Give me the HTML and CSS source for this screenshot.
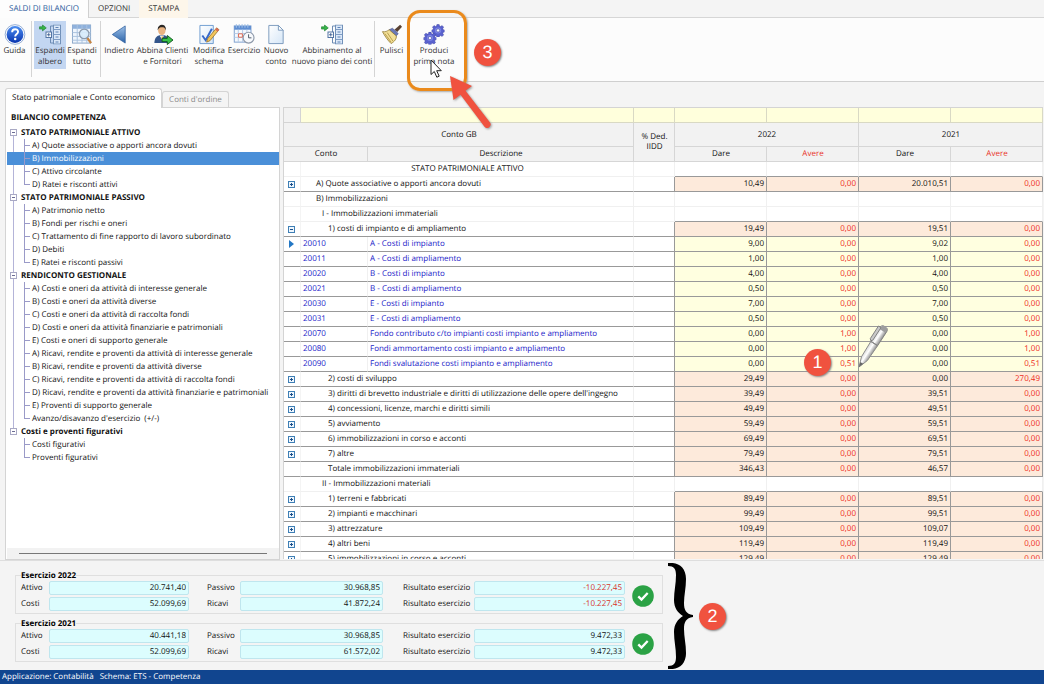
FILE: index.html
```html
<!DOCTYPE html>
<html lang="it">
<head>
<meta charset="utf-8">
<title>Saldi di bilancio</title>
<link rel="stylesheet" href="styles.css">
</head>
<body>
<svg class="defs" aria-hidden="true">
  <defs>
    <linearGradient id="blueV" x1="0" y1="0" x2="0" y2="1"><stop offset="0" stop-color="#4b8df0"/><stop offset="1" stop-color="#0a35b0"/></linearGradient>
    <linearGradient id="backG" x1="0" y1="0" x2="0" y2="1"><stop offset="0" stop-color="#9cc0e8"/><stop offset="1" stop-color="#2a62a8"/></linearGradient>
    <linearGradient id="paper" x1="0" y1="0" x2="1" y2="1"><stop offset="0" stop-color="#ffffff"/><stop offset="1" stop-color="#d5e6f7"/></linearGradient>
    <linearGradient id="penG" x1="0" y1="0" x2="1" y2="0"><stop offset="0" stop-color="#d8d8d8"/><stop offset=".45" stop-color="#ffffff"/><stop offset="1" stop-color="#8c8c8c"/></linearGradient>
    <symbol id="plus" viewBox="0 0 7 7"><rect x=".5" y=".5" width="6" height="6" fill="#eef6fd" stroke="#3f7fb5"/><path d="M2 3.5h3M3.5 2v3" stroke="#1b4f8a"/></symbol>
    <symbol id="minus" viewBox="0 0 7 7"><rect x=".5" y=".5" width="6" height="6" fill="#eef6fd" stroke="#3f7fb5"/><path d="M2 3.5h3" stroke="#1b4f8a"/></symbol>
    <symbol id="collapse" viewBox="0 0 7 7"><rect x=".5" y=".5" width="6" height="6" fill="#fff" stroke="#a9a9c4"/><path d="M2 3.5h3" stroke="#6c6c94"/></symbol>
    <symbol id="ok" viewBox="0 0 22 22"><circle cx="11" cy="11" r="10.8" fill="#2ba245"/><path d="M6.3 11.4l3.2 3.2 6.2-6.6" fill="none" stroke="#fff" stroke-width="2.3"/></symbol>
    <symbol id="treeicon" viewBox="0 0 22 20">
      <path d="M11.500 1.500h3M11.500 18.500h3M11.500 1.500v6M11.500 13v5.500" fill="none" stroke="#6d8cb4"/>
      <rect x="14.500" y=".5" width="7" height="19" fill="#dbe8f8" stroke="#7190b8"/>
      <path d="M14.500 5h7M14.500 10h7M14.500 15h7" stroke="#7e9cc4" fill="none"/><path d="M16.500 3h3M16.500 7.500h3M16.500 12.500h3M16.500 17.500h3" stroke="#5f83b6"/>
      <rect x="7" y="7.500" width="5.500" height="5.500" fill="#fff" stroke="#5375a4"/><path d="M8 10.250h3.500M9.750 8.500v3.500" stroke="#2f5288" stroke-width=".8"/>
      <path d="M.5 2.300h3V.4l3.800 3-3.800 3V4.600h-3z" fill="#39b54a" stroke="#157a2a" stroke-width=".6"/>
    </symbol>
    <symbol id="gear" viewBox="-7 -7 14 14">
      <g fill="#5a62cf" stroke="#3d439f" stroke-width=".5">
        <path d="M-1.200-6.500h2.400l.4 1.700 1.300.5 1.500-1 1.700 1.700-1 1.500.5 1.300 1.700.4v2l-1.700.4-.5 1.300 1 1.500-1.700 1.700-1.500-1-1.300.5-.4 1.500h-2.400l-.4-1.500-1.300-.5-1.500 1-1.700-1.700 1-1.500-.5-1.300-1.600-.4v-2l1.600-.4.5-1.300-1-1.500 1.700-1.700 1.500 1 1.300-.5z"/>
      </g>
      <circle r="3.300" fill="#7d86e6"/><circle r="1.800" fill="#f6f6ff" stroke="#3d439f" stroke-width=".6"/>
    </symbol>
  </defs>
</svg>

<nav class="menu">
  <a class="menu-tab is-active" href="#saldi">SALDI DI BILANCIO</a>
  <a class="menu-tab" href="#opzioni">OPZIONI</a>
  <a class="menu-tab is-warm" href="#stampa">STAMPA</a>
</nav>

<header class="ribbon">
  <button class="tool w-s">
    <svg viewBox="0 0 22 22"><circle cx="11" cy="11" r="10.300" fill="#fff" stroke="#7494c8" stroke-width=".8"/><circle cx="11" cy="11" r="8.800" fill="url(#blueV)"/><path d="M8 8.600c0-4.200 6.200-4 6.200-.5 0 2.300-3 2.300-3 4.900" fill="none" stroke="#fff" stroke-width="2"/><circle cx="11.200" cy="15.800" r="1.300" fill="#fff"/></svg>
    <span>Guida</span>
  </button>
  <span class="sep"></span>
  <button class="tool w-m is-on"><svg viewBox="0 0 22 20"><use href="#treeicon"/></svg><span>Espandi<br>albero</span></button>
  <button class="tool w-m">
    <svg viewBox="0 0 22 22"><rect x="1" y="1" width="19" height="19" fill="#eef5fd" stroke="#8ba7c9"/><rect x="1" y="1" width="19" height="4" fill="#8fb1dc"/><path d="M1 9h19M1 13h19M1 17h19M6 1v19M11 1v19M16 1v19" stroke="#a9c2de" fill="none"/><path d="M16.500 14.500l4 5.500" stroke="#c9853f" stroke-width="2.400"/><circle cx="13.300" cy="10.300" r="5" fill="#d9ecfb" fill-opacity=".9" stroke="#8c9aac" stroke-width="1.300"/></svg>
    <span>Espandi<br>tutto</span>
  </button>
  <span class="sep"></span>
  <button class="tool w-m"><svg viewBox="0 0 22 22"><path d="M17.500 2v18L4 11z" fill="url(#backG)" stroke="#2d5f9f" stroke-width=".8"/></svg><span>Indietro</span></button>
  <button class="tool w-l">
    <svg viewBox="0 0 22 22"><path d="M2 20c0-6 3-8.500 8-8.500s7 2 7 8.500z" fill="#34568c"/><path d="M7.500 12l2.200 4 2.500-4z" fill="#fff"/><path d="M9.300 13l.6 5 1.200-5z" fill="#d9a53a"/><ellipse cx="9.800" cy="6.800" rx="3.900" ry="5" fill="#e9b382"/><path d="M5.500 6.500C4.500-1 15-1.500 14 6.500c-1-2.500-2-3-4-3s-3.500.5-4.500 3z" fill="#2a2725"/><path d="M10 15h5.500v-3l6 4.800-6 4.700v-3H10z" fill="#38c248" stroke="#0b4c19" stroke-width=".9"/></svg>
    <span>Abbina Clienti<br>e Fornitori</span>
  </button>
  <button class="tool w-e">
    <svg viewBox="0 0 22 22"><path d="M1.500 1.500h14v19h-14z" fill="url(#paper)" stroke="#6d9bd0"/><path d="M4 12l3.500 5L14 5" fill="none" stroke="#3668c9" stroke-width="2"/><path d="M19 4l2.500 2-9.500 11.500-3.500 1.500 1-3.500z" fill="#f3c65b" stroke="#8d6a2a" stroke-width=".8"/><path d="M19 4l2.500 2-1.500 2-2.500-2z" fill="#d96a57"/></svg>
    <span>Modifica<br>schema</span>
  </button>
  <button class="tool w-m">
    <svg viewBox="0 0 22 22"><rect x=".8" y="2" width="17.500" height="17" fill="#f5f9fe" stroke="#7d9fce"/><path d="M.8 2h17.500v4H.8z" fill="#5f8ed2"/><path d="M3 .3v3.500M6 .3v3.500M9 .3v3.500M12 .3v3.500M15 .3v3.500" stroke="#9cbce6" stroke-width="1.200"/><path d="M1 10h17M1 14h17M5 6v13M9.500 6v13M14 6v13" stroke="#b6cbe6" fill="none"/><path d="M5.300 10.300h4v3.500h-4z" fill="#fff" stroke="#e2674e"/><circle cx="15.800" cy="14.300" r="5.700" fill="#f7f9fc" stroke="#8e99a9" stroke-width="1.200"/><path d="M15.800 10.800v3.700h3" fill="none" stroke="#4c5866"/></svg>
    <span>Esercizio</span>
  </button>
  <button class="tool w-m"><svg viewBox="0 0 22 22"><path d="M3.500 1.500h10l5 5v14h-15z" fill="url(#paper)" stroke="#7b99bd"/><path d="M13.500 1.500v5h5z" fill="#fff" stroke="#7b99bd"/></svg><span>Nuovo<br>conto</span></button>
  <button class="tool w-xl"><svg viewBox="0 0 22 20"><use href="#treeicon"/></svg><span>Abbinamento al<br>nuovo piano dei conti</span></button>
  <span class="sep"></span>
  <button class="tool w-s">
    <svg viewBox="0 0 22 22"><path d="M19.500.8l2 2-5 5.700-3-2.500z" fill="#5a4234"/><path d="M11.500 4.500l6 5.500-2 2.500L8 6z" fill="#6a79b8" stroke="#3e4a80" stroke-width=".6"/><path d="M8 6l7.500 6.500c.5 3-2 6-5.500 8C6.500 17 3 12 1 8c3 .6 5-.5 7-2z" fill="#f2df96" stroke="#8f7730" stroke-width=".8"/><path d="M6 9l6 9M3.500 10l6.500 9" stroke="#a98d3c" stroke-width=".8"/></svg>
    <span>Pulisci</span>
  </button>
  <button class="tool w-l2"><svg viewBox="0 0 22 22"><use href="#gear" x="8.500" y="0" width="13.500" height="13.500"/><use href="#gear" x="0" y="8" width="13.500" height="13.500"/></svg><span>Produci<br>prima nota</span></button>
</header>

<main class="work">
  <section class="side">
    <nav class="page-tabs">
      <a class="page-tab is-active" href="#stato">Stato patrimoniale e Conto economico</a>
      <a class="page-tab" href="#ordine">Conti d'ordine</a>
    </nav>
    <div class="tree-pane">
      <h1 class="tree-title">BILANCIO COMPETENZA</h1>
      <ul class="tree">
        <li><div class="node"><button class="fold" aria-label="Comprimi"><svg viewBox="0 0 7 7"><use href="#collapse"/></svg></button>STATO PATRIMONIALE ATTIVO</div>
          <ul class="leaves"><li>A) Quote associative o apporti ancora dovuti</li><li class="is-selected">B) Immobilizzazioni</li><li>C) Attivo circolante</li><li>D) Ratei e risconti attivi</li></ul></li>
        <li><div class="node"><button class="fold" aria-label="Comprimi"><svg viewBox="0 0 7 7"><use href="#collapse"/></svg></button>STATO PATRIMONIALE PASSIVO</div>
          <ul class="leaves"><li>A) Patrimonio netto</li><li>B) Fondi per rischi e oneri</li><li>C) Trattamento di fine rapporto di lavoro subordinato</li><li>D) Debiti</li><li>E) Ratei e risconti passivi</li></ul></li>
        <li><div class="node"><button class="fold" aria-label="Comprimi"><svg viewBox="0 0 7 7"><use href="#collapse"/></svg></button>RENDICONTO GESTIONALE</div>
          <ul class="leaves"><li>A) Costi e oneri da attività di interesse generale</li><li>B) Costi e oneri da attività diverse</li><li>C) Costi e oneri da attività di raccolta fondi</li><li>D) Costi e oneri da attività finanziarie e patrimoniali</li><li>E) Costi e oneri di supporto generale</li><li>A) Ricavi, rendite e proventi da attività di interesse generale</li><li>B) Ricavi, rendite e proventi da attività diverse</li><li>C) Ricavi, rendite e proventi da attività di raccolta fondi</li><li>D) Ricavi, rendite e proventi da attività finanziarie e patrimoniali</li><li>E) Proventi di supporto generale</li><li>Avanzo/disavanzo d'esercizio&nbsp; (+/-)</li></ul></li>
        <li><div class="node"><button class="fold" aria-label="Comprimi"><svg viewBox="0 0 7 7"><use href="#collapse"/></svg></button>Costi e proventi figurativi</div>
          <ul class="leaves"><li>Costi figurativi</li><li>Proventi figurativi</li></ul></li>
      </ul>
      <div class="scroll"><div class="thumb"></div></div>
    </div>
  </section>

  <section class="grid-pane">
    <table class="grid">
      <colgroup><col class="c-exp"><col class="c-conto"><col><col class="c-ded"><col class="c-num"><col class="c-num"><col class="c-num"><col class="c-num"></colgroup>
      <thead>
        <tr class="filter"><td class="corner"></td><td></td><td></td><td></td><td></td><td></td><td></td><td></td></tr>
        <tr class="head-top"><th colspan="3">Conto GB</th><th rowspan="2">% Ded.<br>IIDD</th><th colspan="2">2022</th><th colspan="2">2021</th></tr>
        <tr class="head-sub"><th colspan="2">Conto</th><th>Descrizione</th><th>Dare</th><th class="red">Avere</th><th>Dare</th><th class="red">Avere</th></tr>
      </thead>
      <tbody>
        <tr class="title lead"><td></td><td colspan="2" class="mid">STATO PATRIMONIALE ATTIVO</td><td></td><td></td><td></td><td></td><td></td></tr>
        <tr class="sum"><td><button class="exp" aria-label="Espandi"><svg viewBox="0 0 7 7"><use href="#plus"/></svg></button></td><td colspan="2" class="l1">A) Quote associative o apporti ancora dovuti</td><td></td><td>10,49</td><td>0,00</td><td>20.010,51</td><td>0,00</td></tr>
        <tr class="title"><td></td><td colspan="2" class="l1">B) Immobilizzazioni</td><td></td><td></td><td></td><td></td><td></td></tr>
        <tr class="title lead"><td></td><td colspan="2" class="l2">I - Immobilizzazioni immateriali</td><td></td><td></td><td></td><td></td><td></td></tr>
        <tr class="sum"><td><button class="exp" aria-label="Comprimi"><svg viewBox="0 0 7 7"><use href="#minus"/></svg></button></td><td colspan="2" class="l3">1) costi di impianto e di ampliamento</td><td></td><td>19,49</td><td>0,00</td><td>19,51</td><td>0,00</td></tr>
        <tr class="acc"><td><svg class="cur" viewBox="0 0 5 8"><path d="M0 0l5 4-5 4z" fill="#2377c4"/></svg></td><td>20010</td><td>A - Costi di impianto</td><td></td><td>9,00</td><td>0,00</td><td>9,02</td><td>0,00</td></tr>
        <tr class="acc"><td></td><td>20011</td><td>A - Costi di ampliamento</td><td></td><td>1,00</td><td>0,00</td><td>1,00</td><td>0,00</td></tr>
        <tr class="acc"><td></td><td>20020</td><td>B - Costi di impianto</td><td></td><td>4,00</td><td>0,00</td><td>4,00</td><td>0,00</td></tr>
        <tr class="acc"><td></td><td>20021</td><td>B - Costi di ampliamento</td><td></td><td>0,50</td><td>0,00</td><td>0,50</td><td>0,00</td></tr>
        <tr class="acc"><td></td><td>20030</td><td>E - Costi di impianto</td><td></td><td>7,00</td><td>0,00</td><td>7,00</td><td>0,00</td></tr>
        <tr class="acc"><td></td><td>20031</td><td>E - Costi di ampliamento</td><td></td><td>0,50</td><td>0,00</td><td>0,50</td><td>0,00</td></tr>
        <tr class="acc"><td></td><td>20070</td><td>Fondo contributo c/to impianti costi impianto e ampliamento</td><td></td><td>0,00</td><td>1,00</td><td>0,00</td><td>1,00</td></tr>
        <tr class="acc"><td></td><td>20080</td><td>Fondi ammortamento costi impianto e ampliamento</td><td></td><td>0,00</td><td>1,00</td><td>0,00</td><td>1,00</td></tr>
        <tr class="acc"><td></td><td>20090</td><td>Fondi svalutazione costi impianto e ampliamento</td><td></td><td>0,00</td><td>0,51</td><td>0,00</td><td>0,51</td></tr>
        <tr class="sum"><td><button class="exp" aria-label="Espandi"><svg viewBox="0 0 7 7"><use href="#plus"/></svg></button></td><td colspan="2" class="l3">2) costi di sviluppo</td><td></td><td>29,49</td><td>0,00</td><td>0,00</td><td>270,49</td></tr>
        <tr class="sum"><td><button class="exp" aria-label="Espandi"><svg viewBox="0 0 7 7"><use href="#plus"/></svg></button></td><td colspan="2" class="l3">3) diritti di brevetto industriale e diritti di utilizzazione delle opere dell'ingegno</td><td></td><td>39,49</td><td>0,00</td><td>39,51</td><td>0,00</td></tr>
        <tr class="sum"><td><button class="exp" aria-label="Espandi"><svg viewBox="0 0 7 7"><use href="#plus"/></svg></button></td><td colspan="2" class="l3">4) concessioni, licenze, marchi e diritti simili</td><td></td><td>49,49</td><td>0,00</td><td>49,51</td><td>0,00</td></tr>
        <tr class="sum"><td><button class="exp" aria-label="Espandi"><svg viewBox="0 0 7 7"><use href="#plus"/></svg></button></td><td colspan="2" class="l3">5) avviamento</td><td></td><td>59,49</td><td>0,00</td><td>59,51</td><td>0,00</td></tr>
        <tr class="sum"><td><button class="exp" aria-label="Espandi"><svg viewBox="0 0 7 7"><use href="#plus"/></svg></button></td><td colspan="2" class="l3">6) immobilizzazioni in corso e acconti</td><td></td><td>69,49</td><td>0,00</td><td>69,51</td><td>0,00</td></tr>
        <tr class="sum"><td><button class="exp" aria-label="Espandi"><svg viewBox="0 0 7 7"><use href="#plus"/></svg></button></td><td colspan="2" class="l3">7) altre</td><td></td><td>79,49</td><td>0,00</td><td>79,51</td><td>0,00</td></tr>
        <tr class="sum"><td></td><td colspan="2" class="l3">Totale immobilizzazioni immateriali</td><td></td><td>346,43</td><td>0,00</td><td>46,57</td><td>0,00</td></tr>
        <tr class="title lead"><td></td><td colspan="2" class="l2">II - Immobilizzazioni materiali</td><td></td><td></td><td></td><td></td><td></td></tr>
        <tr class="sum"><td><button class="exp" aria-label="Espandi"><svg viewBox="0 0 7 7"><use href="#plus"/></svg></button></td><td colspan="2" class="l3">1) terreni e fabbricati</td><td></td><td>89,49</td><td>0,00</td><td>89,51</td><td>0,00</td></tr>
        <tr class="sum"><td><button class="exp" aria-label="Espandi"><svg viewBox="0 0 7 7"><use href="#plus"/></svg></button></td><td colspan="2" class="l3">2) impianti e macchinari</td><td></td><td>99,49</td><td>0,00</td><td>99,51</td><td>0,00</td></tr>
        <tr class="sum"><td><button class="exp" aria-label="Espandi"><svg viewBox="0 0 7 7"><use href="#plus"/></svg></button></td><td colspan="2" class="l3">3) attrezzature</td><td></td><td>109,49</td><td>0,00</td><td>109,07</td><td>0,00</td></tr>
        <tr class="sum"><td><button class="exp" aria-label="Espandi"><svg viewBox="0 0 7 7"><use href="#plus"/></svg></button></td><td colspan="2" class="l3">4) altri beni</td><td></td><td>119,49</td><td>0,00</td><td>119,49</td><td>0,00</td></tr>
        <tr class="sum"><td><button class="exp" aria-label="Espandi"><svg viewBox="0 0 7 7"><use href="#plus"/></svg></button></td><td colspan="2" class="l3">5) immobilizzazioni in corso e acconti</td><td></td><td>129,49</td><td>0,00</td><td>129,49</td><td>0,00</td></tr>
      </tbody>
    </table>
  </section>
</main>

<section class="summary">
  <div class="years">
    <fieldset class="year">
      <legend>Esercizio 2022</legend>
      <div class="fields">
        <label for="a22">Attivo</label><input id="a22" value="20.741,40" readonly>
        <label for="p22">Passivo</label><input id="p22" value="30.968,85" readonly>
        <label for="r22">Risultato esercizio</label><input id="r22" class="neg" value="-10.227,45" readonly>
        <label for="c22">Costi</label><input id="c22" value="52.099,69" readonly>
        <label for="v22">Ricavi</label><input id="v22" value="41.872,24" readonly>
        <label for="s22">Risultato esercizio</label><input id="s22" class="neg" value="-10.227,45" readonly>
      </div>
      <svg class="ok" viewBox="0 0 22 22"><use href="#ok"/></svg>
    </fieldset>
    <fieldset class="year">
      <legend>Esercizio 2021</legend>
      <div class="fields">
        <label for="a21">Attivo</label><input id="a21" value="40.441,18" readonly>
        <label for="p21">Passivo</label><input id="p21" value="30.968,85" readonly>
        <label for="r21">Risultato esercizio</label><input id="r21" value="9.472,33" readonly>
        <label for="c21">Costi</label><input id="c21" value="52.099,69" readonly>
        <label for="v21">Ricavi</label><input id="v21" value="61.572,02" readonly>
        <label for="s21">Risultato esercizio</label><input id="s21" value="9.472,33" readonly>
      </div>
      <svg class="ok" viewBox="0 0 22 22"><use href="#ok"/></svg>
    </fieldset>
  </div>
  <svg class="brace" viewBox="0 0 26 106"><path d="M0 0c10-1 18 4 18 16 0 9-2 16-2 24 0 7 2 11 9 12v2c-7 1-9 5-9 12 0 8 2 15 2 24 0 12-8 17-18 16v-3c6 0 8-3 8-9 0-9-2-16-2-25 0-8 4-13 9-16-5-3-9-8-9-16 0-9 2-16 2-25 0-6-2-9-8-9z" fill="#000"/></svg>
  <span class="badge">2</span>
</section>

<footer class="status"><span>Applicazione: Contabilità</span><span>Schema: ETS - Competenza</span></footer>

<div class="callout-frame"></div>
<svg class="callout-arrow" viewBox="0 0 50 60"><path d="M5 5l22 10-6.500 4.700L45 51.500a3.500 3.500 0 0 1-5.500 4.300L15.500 23.800 8.500 29z" fill="#f0523f"/></svg>
<svg class="pointer" viewBox="0 0 12 19"><path d="M1 1v14.500l3.300-3 2.500 5.700 2.400-1-2.500-5.500h4.600z" fill="#fff" stroke="#222"/></svg>
<span class="badge at-3">3</span>
<span class="badge at-1">1</span>
<svg class="pen" viewBox="0 0 32 46">
  <g transform="translate(1 44) rotate(33)"><path d="M0 0l-3.500-10L-4-28h8l-.5 18z" fill="url(#penG)" stroke="#8b8b8b" stroke-width=".9"/><path d="M-4-28v-17c0-4 8-4 8 0v17z" fill="url(#penG)" stroke="#828282" stroke-width=".9"/><path d="M-4-28h8" stroke="#888"/><path d="M-3-48h6v5h-6z" fill="#9d9d9d"/><path d="M-3-45h-3v15l1.500 1.500L-3-30z" fill="#c9c9c9" stroke="#777" stroke-width=".8"/><path d="M0 0l-1.700-5h3.400z" fill="#666"/></g>
</svg>
</body>
</html>
```
FILE: styles.css
```css
* { box-sizing: border-box; }
body {
  margin: 0;
  height: 100vh;
  display: flex;
  flex-direction: column;
  position: relative;
  overflow: hidden;
  background: #f4f4f4;
  color: #111;
  font: 8px/13px "Open Sans", "Noto Sans", sans-serif;
  text-rendering: geometricPrecision;
}
button, input { font: inherit; color: inherit; text-rendering: inherit; }
a { color: inherit; text-decoration: none; }
ul { list-style: none; margin: 0; padding: 0; }
.defs { position: absolute; width: 0; height: 0; }

.menu { display: flex; height: 18px; flex: none; border-bottom: 1px solid #d6d6d6; line-height: 17px; color: #333; }
.menu-tab { height: 18px; padding: 0 9px; }
.menu-tab.is-active { background: #fdfdfd; border: solid #d0d0d0; border-width: 0 1px 0 0; color: #2c5c9c; }
.menu-tab.is-warm { background: #fdf6ea; }

.ribbon { display: flex; flex: none; height: 64px; padding-top: 3px; background: #fcfcfc; border-bottom: 1px solid #cfcfcf; line-height: 11px; color: #333; }
.tool { border: 0; padding: 3px 0 0; background: none; height: 48px; display: flex; flex-direction: column; align-items: center; white-space: nowrap; flex: none; }
.tool svg { width: 22px; height: 21px; flex: none; }
.tool.is-on { background: #c3d6f1; }
.w-s { width: 29px; }
.w-m { width: 32px; }
.w-e { width: 38px; }
.w-l { width: 55px; }
.w-l2 { width: 56px; }
.w-xl { width: 80px; }
.sep { width: 1px; height: 56px; margin: 0 2px; background: #d4d4d4; flex: none; }

.work { flex: 1; min-height: 0; display: flex; gap: 3px; padding: 6px 1px 0 5px; }
.side { width: 275px; flex: none; display: flex; flex-direction: column; }
.page-tabs { display: flex; align-items: flex-end; height: 19px; flex: none; }
.page-tab { height: 16px; line-height: 15px; padding: 0 6px; border: 1px solid #d4d4d4; border-bottom: 0; border-radius: 3px 3px 0 0; color: #8a8a8a; }
.page-tab.is-active { height: 20px; line-height: 18px; margin-bottom: -1px; background: #fff; color: #111; position: relative; }
.tree-pane { flex: 1; min-height: 0; display: flex; flex-direction: column; background: #fff; border: 1px solid #d4d4d4; padding: 3px 0 0 1px; }
.tree-title { margin: 0 0 2px 4px; font-size: 8px; line-height: 13px; font-weight: 700; }
.tree { flex: 1; min-height: 0; position: relative; }
.tree > li { position: relative; }
.tree > li:not(:last-child)::before { content: ""; position: absolute; left: 6px; top: 6px; bottom: -6px; width: 1px; background: #b4b4d8; }
.node { display: flex; align-items: center; gap: 4px; height: 13px; padding-left: 3px; font-weight: 700; }
.fold { width: 7px; height: 7px; padding: 0; border: 0; background: none; display: flex; position: relative; }
.fold svg, .exp svg { width: 7px; height: 7px; display: block; }
.leaves li { position: relative; height: 13px; padding-left: 25px; white-space: nowrap; }
.leaves li::before { content: ""; position: absolute; left: 17px; top: 0; height: 13px; width: 1px; background: #9a9ac8; }
.leaves li:last-child::before { height: 7px; }
.leaves li::after { content: ""; position: absolute; left: 17px; top: 6px; width: 6px; height: 1px; background: #9a9ac8; }
.leaves .is-selected { background: #4a8fd8; color: #fff; }
.scroll { height: 11px; flex: none; padding: 5px 12px; background: #f2f2f2; }
.thumb { height: 1px; background: #777; }

.grid-pane { flex: 1; min-width: 0; margin: 19px 0 1px; overflow: hidden; background: #fff; border-left: 1px solid #d4d4d4; border-top: 1px solid #d4d4d4; }
.grid { width: 100%; table-layout: fixed; border-collapse: separate; border-spacing: 0; line-height: 14px; }
.c-exp { width: 17px; }
.c-conto { width: 67px; }
.c-ded { width: 41px; }
.c-num { width: 92px; }
.grid td, .grid th { padding: 0 2px 0 3px; height: 15px; border: solid #f0f0f0; border-width: 0 1px 1px 0; white-space: nowrap; font-weight: 400; }
.grid .filter td { background: #ffffdc; border-color: #d9d9c4; }
.grid .filter .corner { background: #f2f2f2; border-color: #d4d4d4; }
.grid th { background: #f2f2f2; border-color: #d6d6d6; line-height: 10px; }
.grid .head-top th { height: 24px; }
.grid .red { color: #e8332a; }
.grid td:first-child { text-align: center; padding: 0 1px 0 0; border-right-color: #f4f4f4; }
.grid .mid { text-align: center; }
.grid .l1 { padding-left: 15px; }
.grid .l2 { padding-left: 21px; }
.grid .l3 { padding-left: 27px; }
.grid .sum td, .grid .acc td { border-bottom-color: #999; }
.grid .lead td:nth-last-child(-n+4) { border-bottom-color: #999; }
.grid .sum td:nth-last-child(-n+5), .grid .acc td:nth-last-child(-n+5) { border-right-color: #999; }
.sum td:nth-last-child(-n+4) { background: #fdeadb; text-align: right; }
.acc td:nth-last-child(-n+4) { background: #ffffe0; text-align: right; }
.sum td:last-child, .acc td:last-child, .sum td:nth-last-child(3), .acc td:nth-last-child(3) { color: #ee2a20; }
.acc td:nth-child(2), .acc td:nth-child(3) { color: #1818c8; padding-left: 2px; }
.exp { width: 7px; height: 7px; padding: 0; border: 0; background: none; display: block; margin: 0 auto; }
.cur { width: 5px; height: 8px; display: block; margin: 0 auto; }

.summary { flex: none; display: flex; align-items: flex-start; padding: 2px 15px 1px; border-top: 1px solid #dedede; }
.years { flex: 0 1 648px; display: flex; flex-direction: column; gap: 4px; padding-top: 7px; }
.year { margin: 0; border: 1px solid #dfdfdf; padding: 0 8px 2px 5px; min-width: 0; display: flex; align-items: center; justify-content: space-between; }
.year legend { padding: 0; line-height: 11px; font-weight: 700; color: #000; }
.fields { display: grid; grid-template-columns: 28px 140px 51px 143px 91px 151px; gap: 2px 0; }
.fields label { line-height: 13px; white-space: nowrap; }
.fields label:nth-of-type(3n+2) { padding-left: 18px; }
.fields label:nth-of-type(3n) { padding-left: 20px; }
.fields input { width: 100%; height: 14px; padding: 0 2px 1px; border: 1px solid #bfe6ee; border-radius: 2px; background: #dcfdfe; text-align: right; }
.fields .neg { color: #d8322a; }
.ok { width: 22px; height: 22px; flex: none; }
.brace { width: 26px; height: 106px; margin-left: 5px; flex: none; }
.badge { width: 27px; height: 27px; flex: none; border-radius: 50%; background: #f0523f; color: #fff; font: 18px/27px "Liberation Sans", sans-serif; text-align: center; box-shadow: 1px 1px 2px #888; }
.summary .badge { margin-left: 5px; align-self: center; }

.status { flex: none; height: 14px; display: flex; gap: 6px; padding-left: 2px; background: #11458f; color: #fff; line-height: 14px; }

.callout-frame { position: absolute; left: 407px; top: 10px; width: 60px; height: 81px; border: 3px solid #ea8a1c; border-radius: 13px; box-shadow: 1px 1px 2px #aaa; }
.callout-arrow { position: absolute; left: 445px; top: 71px; width: 50px; height: 60px; filter: drop-shadow(1px 1px 1px #999); }
.pointer { position: absolute; left: 430px; top: 59px; width: 12px; height: 19px; }
.at-3 { position: absolute; left: 474px; top: 39px; }
.at-1 { position: absolute; right: 213px; top: 349px; }
.pen { position: absolute; right: 154px; top: 323px; width: 32px; height: 46px; overflow: visible; }
```
